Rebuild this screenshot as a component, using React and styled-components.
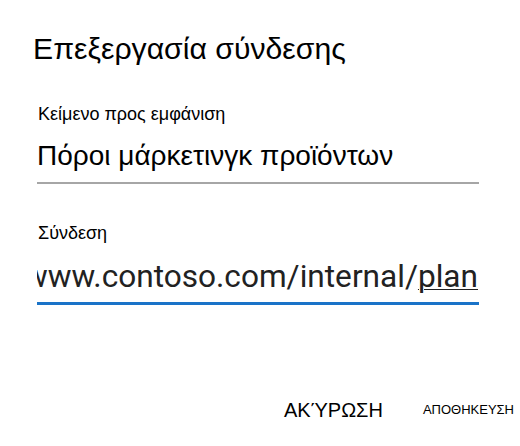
import React from "react";
import styled, { createGlobalStyle } from "styled-components";

const GlobalStyle = createGlobalStyle`
  html, body {
    margin: 0;
    padding: 0;
    background: #ffffff;
  }
  body {
    font-family: "Liberation Sans", Arial, sans-serif;
    color: #000000;
  }
`;

const Dialog = styled.div`
  width: 520px;
  height: 446px;
  display: flex;
  flex-direction: column;
  overflow: hidden;
`;

const Title = styled.h1`
  margin: 0;
  padding: 29px 0 0 33px;
  font-size: 30.2px;
  font-weight: 400;
  line-height: 40px;
`;

const Form = styled.div`
  display: flex;
  flex-direction: column;
  margin: 0 0 0 37px;
  width: 442px;
`;

const Field = styled.div`
  display: flex;
  flex-direction: column;
  margin-top: ${(props) => props.top};
`;

const Label = styled.label`
  padding-left: 1px;
  font-size: 18px;
  line-height: 22px;
`;

const Value = styled.div`
  display: flex;
  justify-content: flex-end;
  overflow: hidden;
  white-space: nowrap;
  margin-top: ${(props) => props.gap};
  padding-bottom: ${(props) => props.pad};
  font-family: ${(props) =>
    props.url ? '"Roboto", "Liberation Sans", sans-serif' : '"Liberation Sans", Arial, sans-serif'};
  font-size: ${(props) => props.size};
  line-height: ${(props) => props.lh};
  color: ${(props) => props.color};
  border-bottom: ${(props) => props.line};
`;

const Plain = styled.span`
  flex: none;
  padding-left: 2px;
  width: 100%;
  text-align: left;
`;

const UrlText = styled.span`
  flex: none;
  padding-right: 1px;
`;

const Underlined = styled.span`
  text-decoration: underline;
  text-decoration-thickness: 1px;
  text-underline-offset: 2px;
`;

const Actions = styled.div`
  display: flex;
  justify-content: flex-end;
  align-items: flex-start;
  margin-top: auto;
  padding: 0 6px 26px 0;
  gap: 40px;
`;

const ActionButton = styled.button`
  border: none;
  background: none;
  padding: 0;
  margin: 0;
  font-family: "Liberation Sans", Arial, sans-serif;
  font-size: ${(props) => props.size};
  line-height: 20px;
  color: #000000;
  cursor: pointer;
`;

export default function App() {
  return (
    <>
      <GlobalStyle />
      <Dialog>
        <Title>Επεξεργασία σύνδεσης</Title>
        <Form>
          <Field top="34px">
            <Label>Κείμενο προς εμφάνιση</Label>
            <Value gap="14px" pad="9px" size="28px" lh="34px" color="#000000" line="2px solid #a6a6a6">
              <Plain>Πόροι μάρκετινγκ προϊόντων</Plain>
            </Value>
          </Field>
          <Field top="38px">
            <Label>Σύνδεση</Label>
            <Value url gap="14px" pad="6px" size="31.6px" lh="38px" color="#222222" line="3px solid #1a73c8">
              <UrlText>
                www.contoso.com/internal/<Underlined>plan</Underlined>
              </UrlText>
            </Value>
          </Field>
        </Form>
        <Actions>
          <ActionButton size="20px">ΑΚΎΡΩΣΗ</ActionButton>
          <ActionButton size="13px">ΑΠΟΘΗΚΕΥΣΗ</ActionButton>
        </Actions>
      </Dialog>
    </>
  );
}
